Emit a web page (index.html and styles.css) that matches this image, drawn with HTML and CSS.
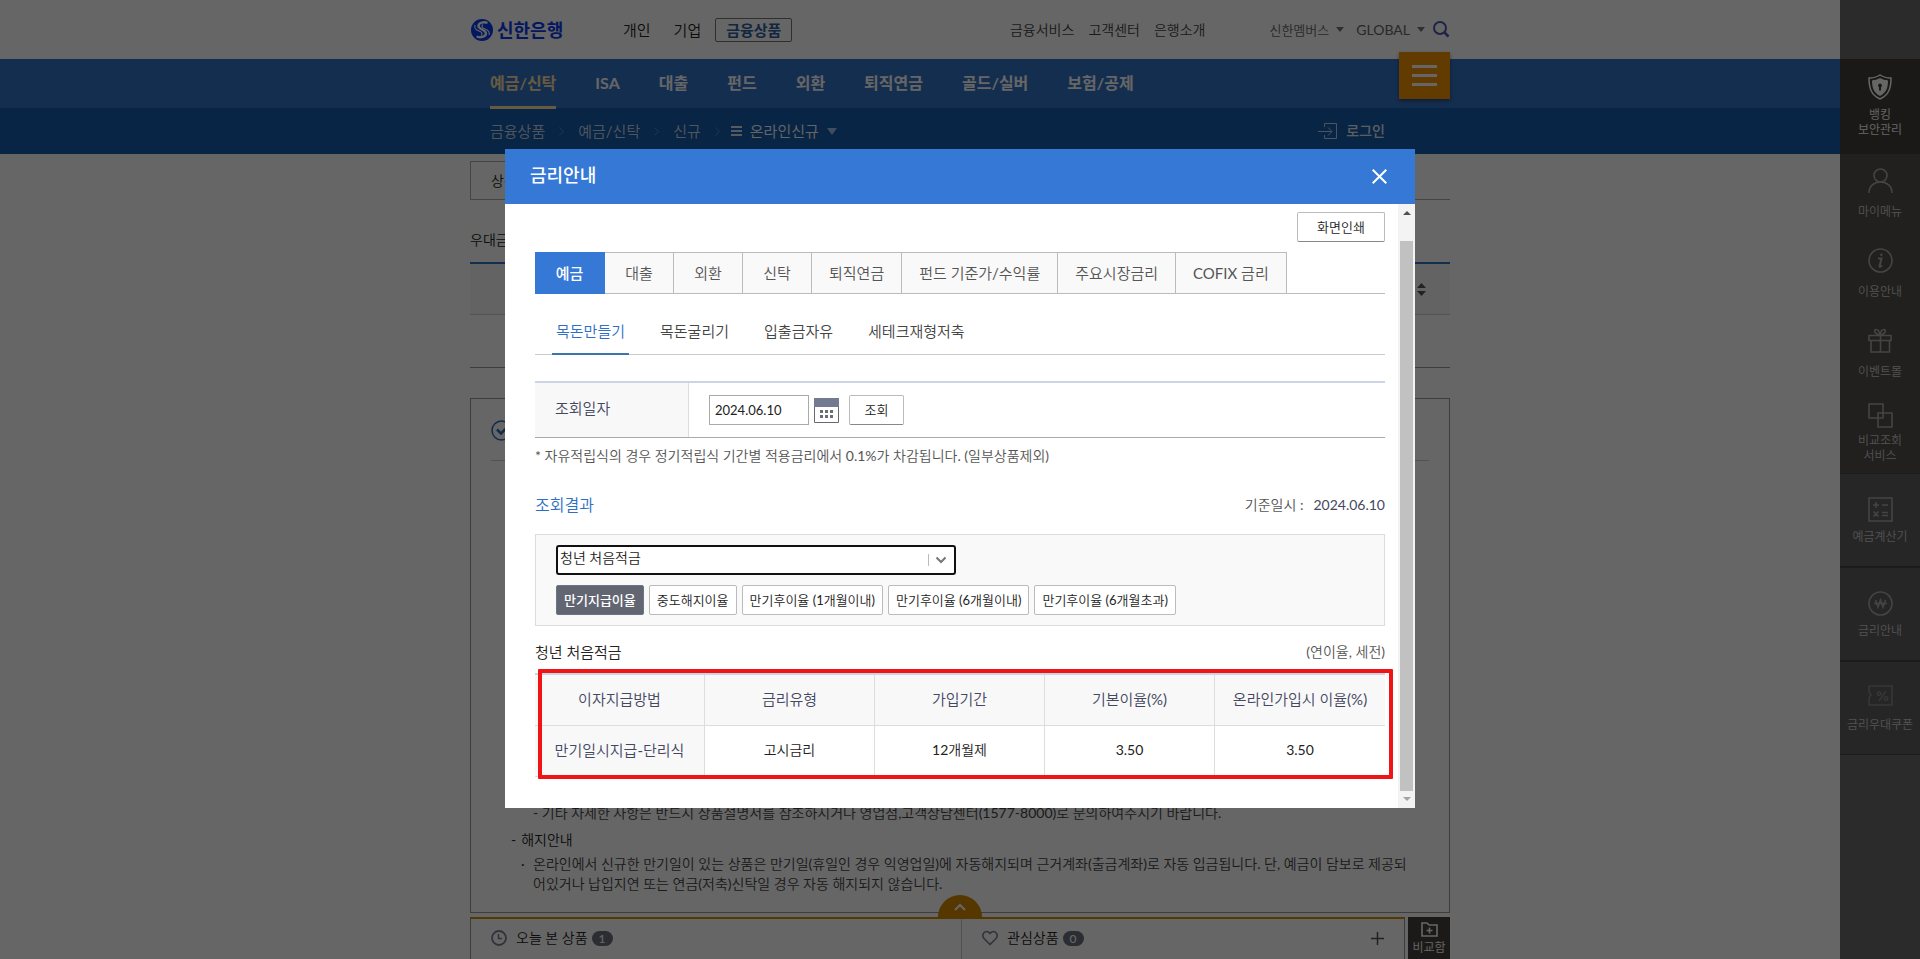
FILE: index.html
```html
<!DOCTYPE html>
<html lang="ko">
<head>
<meta charset="utf-8">
<meta name="viewport" content="width=device-width, initial-scale=1">
<title>신한은행 - 금리안내</title>
<link rel="stylesheet" href="styles.css">
</head>
<body>
<header class="top wrap">
  <a class="logo" href="#">
    <svg width="22" height="22" viewBox="0 0 22 22" aria-hidden="true"><circle cx="11" cy="11" r="11" fill="#0a3cf0"/><path d="M16.500 4C13 2.500 7.500 3.500 7.500 7c0 3.500 7.500 3.500 7.500 7.500 0 3.500-6 4.500-9.500 3" fill="none" stroke="#fff" stroke-width="2.400"/><path d="M4 6c-1 3 1 5 4 6s4 3 2 4.500M18 16c1-3-1-5-4-6s-4-3-2-4.500" fill="none" stroke="#fff" stroke-width="1.100"/></svg>
    <span>신한은행</span>
  </a>
  <nav class="main-links" aria-label="주요">
    <a href="#">개인</a>
    <a href="#">기업</a>
    <a class="current" href="#">금융상품</a>
  </nav>
  <nav class="service-links" aria-label="서비스">
    <a href="#">금융서비스</a>
    <a href="#">고객센터</a>
    <a href="#">은행소개</a>
  </nav>
  <div class="util">
    <button class="drop small" type="button">신한멤버스<svg width="8" height="5" viewBox="0 0 8 5" aria-hidden="true"><path d="M0 0h8L4 5z" fill="#777"/></svg></button>
    <button class="drop" type="button">GLOBAL<svg width="8" height="5" viewBox="0 0 8 5" aria-hidden="true"><path d="M0 0h8L4 5z" fill="#777"/></svg></button>
    <button class="search" type="button" aria-label="검색"><svg width="17" height="17" viewBox="0 0 17 17"><circle cx="7" cy="7" r="6" fill="none" stroke="#4f57ac" stroke-width="2"/><path d="M11.500 11.500l4 4" stroke="#4f57ac" stroke-width="2.500"/></svg></button>
  </div>
</header>

<div class="gnb">
  <div class="wrap gnb-row">
    <nav class="gnb-links" aria-label="금융상품">
      <a class="on" href="#">예금/신탁</a>
      <a href="#">ISA</a>
      <a href="#">대출</a>
      <a href="#">펀드</a>
      <a href="#">외환</a>
      <a href="#">퇴직연금</a>
      <a href="#">골드/실버</a>
      <a href="#">보험/공제</a>
    </nav>
    <button class="all-menu" type="button" aria-label="전체메뉴"><span></span><span></span><span></span></button>
  </div>
</div>
<div class="crumb-bar">
  <div class="wrap crumb-row">
    <nav class="crumbs" aria-label="현재 위치">
      <a href="#">금융상품</a>
      <svg width="5" height="9" viewBox="0 0 5 9" aria-hidden="true"><path d="M.5.5l4 4-4 4"/></svg>
      <a href="#">예금/신탁</a>
      <svg width="5" height="9" viewBox="0 0 5 9" aria-hidden="true"><path d="M.5.5l4 4-4 4"/></svg>
      <a href="#">신규</a>
      <svg width="5" height="9" viewBox="0 0 5 9" aria-hidden="true"><path d="M.5.5l4 4-4 4"/></svg>
      <button class="here" type="button">
        <span class="bars"></span>온라인신규<svg width="10" height="7" viewBox="0 0 10 7" aria-hidden="true"><path class="tri" d="M0 0h10L5 7z"/></svg>
      </button>
    </nav>
    <a class="login" href="#"><svg width="20" height="18" viewBox="0 0 20 18" aria-hidden="true"><path d="M6.500 5V1.500h12v15h-12V13M0 9.500h13.500M10 5.500l4 4-4 4" fill="none" stroke="#c3d2e6"/></svg>로그인</a>
  </div>
</div>

<main class="wrap page">
  <div class="page-tabs"><a href="#">상품</a></div>
  <h2 class="page-label">우대금리</h2>
  <div class="page-head"><button type="button" aria-label="정렬"><svg width="9" height="13" viewBox="0 0 9 13"><path d="M0 5l4.500-5L9 5zM0 8l4.500 5L9 8z" fill="#555"/></svg></button></div>
  <div class="page-row"></div>
  <article class="notice">
    <div class="notice-head"><svg width="21" height="21" viewBox="0 0 21 21" aria-hidden="true"><circle cx="10.500" cy="10.500" r="9.500" fill="none" stroke="#2f6cb5" stroke-width="1.500"/><path d="M6 9.500l4 4 4.500-4.500" fill="none" stroke="#2f6cb5" stroke-width="2.500"/></svg></div>
    <div class="notice-text">
      <p class="deep">- 기타 자세한 사항은 반드시 상품설명서를 참조하시거나 영업점,고객상담센터(1577-8000)로 문의하여주시기 바랍니다.</p>
      <h3><span>-</span>해지안내</h3>
      <p class="dot">온라인에서 신규한 만기일이 있는 상품은 만기일(휴일인 경우 익영업일)에 자동해지되며 근거계좌(출금계좌)로 자동 입금됩니다. 단, 예금이 담보로 제공되<br>어있거나 납입지연 또는 연금(저축)신탁일 경우 자동 해지되지 않습니다.</p>
    </div>
  </article>
</main>

<footer class="dock">
  <div class="dock-bar">
    <button class="dock-toggle" type="button" aria-label="펼치기"><svg width="12" height="8" viewBox="0 0 12 8"><path d="M1 7l5-5 5 5" fill="none" stroke="#fff" stroke-width="2"/></svg></button>
    <div class="dock-cell">
      <svg width="16" height="16" viewBox="0 0 16 16" aria-hidden="true"><circle cx="8" cy="8" r="7" fill="none" stroke="#7c8190" stroke-width="1.800"/><path d="M7.500 4v4.500H11" fill="none" stroke="#7c8190" stroke-width="1.500"/></svg>
      <span>오늘 본 상품</span><b class="count">1</b>
    </div>
    <div class="dock-cell">
      <svg width="16" height="16" viewBox="0 0 16 16" aria-hidden="true"><path d="M8 14.500L2 8.500C-.5 5.500 1.500 1.500 4.500 1.500 6.500 1.500 8 3.500 8 3.500s1.500-2 3.500-2c3 0 5 4 2.500 7z" fill="none" stroke="#7c8190" stroke-width="1.600"/></svg>
      <span>관심상품</span><b class="count">0</b>
      <svg class="plus" width="13" height="13" viewBox="0 0 13 13" aria-hidden="true"><path d="M6.500 0v13M0 6.500h13" stroke="#555" stroke-width="1.500"/></svg>
    </div>
  </div>
  <button class="compare" type="button"><svg width="17" height="15" viewBox="0 0 17 15" aria-hidden="true"><path d="M1 1h5l2 2h8v11H1zM8.500 5.500v6M5.500 8.500h6" fill="none" stroke="#fff" stroke-width="1.600"/></svg>비교함</button>
</footer>

<aside class="side" aria-label="빠른메뉴">
  <a class="safe" href="#"><svg width="24" height="26" viewBox="0 0 24 26" aria-hidden="true"><path d="M12 1c3 2 7 3 11 3 0 10-2 17-11 21C3 21 1 14 1 4c4 0 8-1 11-3z" fill="none" stroke="#fff" stroke-width="1.500"/><path d="M12 4c3 1.500 5 2 8 2.500C20 14 18 19 12 22 6 19 4 14 4 6.500 7 6 9 5.500 12 4z" fill="#fff"/><path d="M12 9.500a2 2 0 0 1 1 3.700v3.300h-2v-3.300a2 2 0 0 1 1-3.700z" fill="#413f3a"/></svg>뱅킹<br>보안관리</a>
  <a class="quick" href="#"><svg width="25" height="25" viewBox="0 0 25 25"><circle cx="12.500" cy="7.500" r="6.500"/><path d="M1 25c0-7 5-11 11.500-11S24 18 24 25"/></svg>마이메뉴</a>
  <a class="quick" href="#"><svg width="25" height="25" viewBox="0 0 25 25"><circle cx="12.500" cy="12.500" r="11.500"/><path d="M10 10.500h3.500l-2 8c1 .5 1.500 0 2.500-1M13.500 5.500l-.3 2.500" stroke-width="2"/></svg>이용안내</a>
  <a class="quick" href="#"><svg width="25" height="25" viewBox="0 0 25 25"><path d="M1 7.500h22v5H1zM3 12.500h18.500V24H3zM12.500 7v17M12 7C6 6 5.500 1.500 8 1.500S11.500 4 12 7c.5-3 1.500-5.500 4-5.500S18 6 12 7z"/></svg>이벤트몰</a>
  <a class="quick two" href="#"><svg width="25" height="25" viewBox="0 0 25 25"><path d="M1 1h14v14H1zM10 10h14v14H10z"/></svg>비교조회<br>서비스</a>
  <a class="tool" href="#"><svg width="25" height="25" viewBox="0 0 25 25"><path d="M1 1h23v23H1zM5 8h6M8 5v6M14 8h6M5.500 14.500l5 5M10.500 14.500l-5 5M14 15.500h6M14 18.500h6"/></svg>예금계산기</a>
  <a class="tool" href="#"><svg width="25" height="25" viewBox="0 0 25 25"><circle cx="12.500" cy="12.500" r="11.500"/><path d="M7.500 9l2.500 7 2.500-7 2.500 7 2.500-7M6 12.500h13"/></svg>금리안내</a>
  <a class="tool faint" href="#"><svg width="25" height="25" viewBox="0 0 25 25"><path d="M1 1h23v19H1v-7l2-3-2-3zM18 6l-7 10"/><circle cx="11" cy="8.500" r="1.700"/><circle cx="18" cy="13.500" r="1.700"/></svg>금리우대쿠폰</a>
</aside>

<div class="overlay">
  <section class="modal" role="dialog" aria-modal="true" aria-labelledby="modal-title">
    <header class="modal-head">
      <h1 id="modal-title">금리안내</h1>
      <button type="button" aria-label="닫기"><svg width="15" height="15" viewBox="0 0 15 15"><path d="M.7.7l13.600 13.600M14.300.7L.7 14.300" stroke="#fff" stroke-width="2"/></svg></button>
    </header>
    <div class="modal-body">
      <div class="content">
        <button class="btn print" type="button">화면인쇄</button>
        <nav class="tabs" aria-label="금리 구분">
          <a class="on" href="#">예금</a>
          <a href="#">대출</a>
          <a href="#">외환</a>
          <a href="#">신탁</a>
          <a href="#">퇴직연금</a>
          <a href="#">펀드 기준가/수익률</a>
          <a href="#">주요시장금리</a>
          <a href="#">COFIX 금리</a>
        </nav>
        <nav class="subtabs" aria-label="예금 구분">
          <a class="on" href="#">목돈만들기</a>
          <a href="#">목돈굴리기</a>
          <a href="#">입출금자유</a>
          <a href="#">세테크재형저축</a>
        </nav>
        <form class="query">
          <label for="date">조회일자</label>
          <div class="query-fields">
            <input id="date" type="text" value="2024.06.10">
            <button class="calendar" type="button" aria-label="달력"><svg width="25" height="25" viewBox="0 0 25 25"><path d="M.5.5h24v24H.5z" fill="#fff" stroke="#68696f"/><path d="M0 0h25v9H0z" fill="#727b92"/><path d="M6 12h3v3H6zM11 12h3v3h-3zM16 12h3v3h-3zM6 17h3v3H6zM11 17h3v3h-3zM16 17h3v3h-3z" fill="#6b6d74"/></svg></button>
            <button class="btn look" type="button">조회</button>
          </div>
        </form>
        <p class="hint">* 자유적립식의 경우 정기적립식 기간별 적용금리에서 0.1%가 차감됩니다. (일부상품제외)</p>
        <div class="result-head">
          <h2>조회결과</h2>
          <p>기준일시 :<strong>2024.06.10</strong></p>
        </div>
        <div class="filter">
          <div class="select">
            <select aria-label="상품 선택"><option>청년 처음적금</option></select>
            <svg width="18" height="12" viewBox="0 0 18 12" aria-hidden="true"><path d="M.5 0v12" stroke="#bbb"/><path d="M8.500 3.500L13 8l4.500-4.500" fill="none" stroke="#777" stroke-width="2"/></svg>
          </div>
          <div class="chips">
            <button class="btn on" type="button">만기지급이율</button>
            <button class="btn" type="button">중도해지이율</button>
            <button class="btn" type="button">만기후이율 (1개월이내)</button>
            <button class="btn" type="button">만기후이율 (6개월이내)</button>
            <button class="btn" type="button">만기후이율 (6개월초과)</button>
          </div>
        </div>
        <div class="rate-head"><h3>청년 처음적금</h3><p>(연이율, 세전)</p></div>
        <div class="rate">
          <table>
            <thead><tr><th scope="col">이자지급방법</th><th scope="col">금리유형</th><th scope="col">가입기간</th><th scope="col">기본이율(%)</th><th scope="col">온라인가입시 이율(%)</th></tr></thead>
            <tbody><tr><th scope="row">만기일시지급-단리식</th><td>고시금리</td><td>12개월제</td><td>3.50</td><td>3.50</td></tr></tbody>
          </table>
          <div class="mark"></div>
        </div>
      </div>
      <div class="scroll" aria-hidden="true">
        <svg width="8" height="4" viewBox="0 0 8 4"><path d="M0 4l4-4 4 4z" fill="#505050"/></svg>
        <span></span>
        <svg width="8" height="4" viewBox="0 0 8 4"><path d="M0 0l4 4 4-4z" fill="#a3a3a3"/></svg>
      </div>
    </div>
  </section>
</div>
</body>
</html>
```
FILE: styles.css
```css
* { box-sizing: border-box; }
body {
  margin: 0;
  height: 100vh;
  overflow: hidden;
  background: #fff;
  color: #222;
  font: 400 14px/20px Lato, "Noto Sans CJK KR DemiLight", "Noto Sans CJK KR", sans-serif;
}
h1, h2, h3, p { margin: 0; font-weight: inherit; font-size: inherit; }
a { color: inherit; text-decoration: none; }
button, input, select { font: inherit; color: inherit; }
button { margin: 0; padding: 0; border: 0; background: none; }
svg { display: block; flex: none; }
.wrap { width: 980px; max-width: 100%; margin: 0 auto; }
.logo, .current, .gnb-links, .login, .modal-head h1, .tabs .on, .chips .on { font-family: Lato, "Noto Sans CJK KR", sans-serif; }

/* top bar */
.top { display: flex; align-items: center; height: 59px; }
.logo { display: flex; align-items: center; gap: 4px; width: 153px; padding-left: 1px; color: #0a3cf0; font-size: 18px; font-weight: 700; }
.main-links { display: flex; align-items: center; gap: 23px; font-size: 15px; }
.main-links .current { height: 24px; margin-left: -9px; padding: 0 10px; border: 1px solid #777; border-radius: 2px; color: #2f5f9f; font-weight: 700; line-height: 22px; }
.service-links { display: flex; gap: 14px; margin-left: auto; color: #444; }
.util { display: flex; align-items: center; margin-left: 64px; color: #666; }
.drop { display: flex; align-items: center; gap: 7px; margin-right: 8px; }
.drop.small { margin-right: 12px; font-size: 13px; }

/* navigation */
.gnb { background: #3473c6; }
.gnb-row { display: flex; justify-content: space-between; height: 49px; padding-left: 20px; }
.gnb-links { display: flex; gap: 39px; color: #fff; font-size: 16px; font-weight: 700; line-height: 48px; }
.gnb-links .on { height: 50px; border-bottom: 3px solid #ffe0a8; color: #ffe0a8; }
.all-menu { display: flex; flex-direction: column; align-items: center; justify-content: center; gap: 6px; width: 51px; height: 47px; margin-top: -7px; background: #f59400; box-shadow: 0 2px 4px rgba(0, 0, 0, .4); }
.all-menu span { width: 25px; height: 3px; background: #fff; }
.crumb-bar { background: #165cae; }
.crumb-row { display: flex; align-items: center; justify-content: space-between; height: 46px; padding: 0 65px 0 20px; }
.crumbs { display: flex; align-items: center; gap: 14px; color: #c8d6e8; font-size: 15px; }
.crumbs path { fill: none; stroke: #5784b8; }
.crumbs .tri { fill: #9ec3ee; stroke: none; }
.here { display: flex; align-items: center; gap: 8px; margin-left: -3px; color: #fff; }
.bars { width: 11px; height: 10px; border: solid #d9e0ea; border-width: 2px 0; background: linear-gradient(transparent 2px, #d9e0ea 2px, #d9e0ea 4px, transparent 4px); }
.login { display: flex; align-items: center; gap: 8px; color: #e4ebf3; font-weight: 500; }

/* page behind the dialog */
.page { padding-top: 7px; }
.page-tabs { height: 39px; border-bottom: 1px solid #aaa; }
.page-tabs a { display: block; width: 200px; height: 39px; padding-left: 20px; border: 1px solid #aaa; font-size: 14px; line-height: 37px; }
.page-label { padding: 30px 0 12px; border-bottom: 2px solid #3473c6; }
.page-head { display: flex; align-items: center; justify-content: flex-end; height: 51px; padding-right: 24px; border-bottom: 1px solid #ccc; background: #f7f7f7; }
.page-row { height: 53px; border-bottom: 1px solid #999; }
.notice { display: flex; flex-direction: column; justify-content: space-between; min-height: 515px; margin-top: 30px; padding: 0 20px 15px; border: 1px solid #999; color: #444; }
.notice-head { padding: 21px 0 19px; border-bottom: 1px solid #ccc; }
.notice-text { padding: 0 0 3px 20px; }
.notice-text h3 { display: flex; gap: 5px; margin: 7px 0 4px; color: #222; }
.deep { padding-left: 22px; }
.dot { padding-left: 22px; white-space: nowrap; }
.dot::before { content: "·"; float: left; margin-left: -12px; }

/* bottom dock */
.dock { position: fixed; right: 0; bottom: 0; left: 0; display: flex; gap: 3px; width: 980px; max-width: 100%; height: 42px; margin: 0 auto; }
.dock-bar { position: relative; display: flex; flex: 1; min-width: 0; border: 1px solid #999; border-width: 0 1px; border-top: 2px solid #d68a00; background: #fff; }
.dock-cell { display: flex; align-items: center; flex: 0 0 490px; padding: 0 20px 2px; }
.dock-cell + .dock-cell { flex: 1; border-left: 1px solid #ccc; }
.dock-cell span { margin: 0 4px 0 9px; }
.count { width: 21px; height: 15px; border-radius: 8px; background: #6c727f; color: #fff; font-size: 12px; font-weight: 500; line-height: 15px; text-align: center; }
.plus { margin-left: auto; }
.dock-toggle { position: absolute; left: 467px; bottom: 100%; display: flex; align-items: center; justify-content: center; width: 44px; height: 24px; border-radius: 22px 22px 0 0; background: #d68a00; }
.compare { display: flex; flex: none; flex-direction: column; align-items: center; justify-content: center; gap: 2px; width: 42px; padding-top: 3px; background: #45423c; color: #fff; font-size: 12px; line-height: 18px; }

/* quick menu */
.side { position: fixed; top: 0; right: 0; bottom: 0; display: flex; flex-direction: column; width: 80px; padding-top: 59px; background: #6c6c6c; font-size: 12px; line-height: 15px; text-align: center; }
.side a { display: flex; flex-direction: column; align-items: center; color: #ccc; }
.side svg { fill: none; stroke: #aaa; stroke-width: 1.600; }
.side .safe { height: 95px; padding-top: 15px; background: #413f3a; color: #fff; }
.side .safe svg { margin-bottom: 7px; stroke: none; }
.side .quick { height: 80px; padding-top: 14px; background: #53504b; }
.quick svg { margin-bottom: 11px; }
.side .two { height: 79px; padding-top: 9px; }
.two svg { margin-bottom: 5px; }
.side .tool { height: 94px; padding-top: 23px; border-top: 1px solid #444; border-bottom: 1px solid #444; background: #625f5f; }
.tool svg { margin-bottom: 7px; }
.side .faint svg { stroke: #888; }

/* dialog */
.overlay { position: fixed; inset: 0; display: flex; align-items: center; justify-content: center; padding-bottom: 2px; background: rgba(0, 0, 0, .6); }
.modal { width: 910px; max-width: 100%; background: #fff; }
.modal-head { display: flex; align-items: center; justify-content: space-between; height: 55px; padding: 0 28px 0 25px; background: #3678d6; color: #fff; }
.modal-head h1 { padding-bottom: 4px; font-size: 18px; font-weight: 500; }
.modal-body { display: flex; }
.content { flex: 1; padding: 8px 13px 31px 30px; }
.btn { height: 30px; padding: 0 7px; border: 1px solid #bbb; border-radius: 2px; background: #fff; color: #222; font-size: 13px; line-height: 28px; white-space: nowrap; }
.print { display: block; width: 88px; margin-left: auto; border-bottom-color: #888; }
.tabs { display: flex; margin-top: 10px; border-bottom: 1px solid #bbb; color: #555; font-size: 15px; line-height: 40px; text-align: center; }
.tabs a { min-width: 69px; padding: 0 17px; border-top: 1px solid #bbb; border-right: 1px solid #bbb; background: #f9f9f9; }
.tabs .on { width: 70px; margin-bottom: -1px; border-color: #3678d6; background: #3678d6; color: #fff; font-weight: 500; }
.subtabs { display: flex; gap: 27px; margin-top: 17px; padding-left: 17px; box-shadow: inset 0 -1px #ccc; color: #444; font-size: 15px; }
.subtabs a { padding: 10px 4px 12px; border-bottom: 2px solid transparent; }
.subtabs .on { border-color: #3d75ae; color: #2e6fc4; }
.query { display: flex; margin-top: 26px; border-top: 2px solid #ccd5e4; border-bottom: 1px solid #aaa; }
.query label { width: 154px; padding-left: 20px; border-right: 1px solid #ddd; background: #f8f8f9; color: #44485f; font-size: 15px; line-height: 50px; }
.query-fields { display: flex; align-items: center; padding: 12px 20px; }
.query input { width: 100px; height: 30px; padding: 0 5px; border: 1px solid #aaa; background: #fff; font-size: 13px; }
.calendar { margin: 0 10px 0 5px; }
.look { width: 55px; border-bottom-color: #888; }
.hint { margin-top: 8px; color: #555; }
.result-head { display: flex; justify-content: space-between; margin-top: 27px; line-height: 24px; }
.result-head h2 { color: #2e6fc4; font-size: 16px; }
.result-head p { color: #555; }
.result-head strong { margin-left: 10px; color: #44485f; font-weight: 400; }
.filter { margin-top: 17px; padding: 10px 20px; border: 1px solid #dcdcdc; background: #f9f9f9; }
.select { position: relative; width: 400px; }
.select select { display: block; width: 100%; height: 30px; padding: 0 2px 4px; border: 2px solid #111; border-radius: 3px; appearance: none; background: #fff; font-size: 14px; }
.select svg { position: absolute; top: 9px; right: 10px; }
.chips { display: flex; gap: 5px; margin-top: 10px; }
.chips .on { border-color: #6b7486; background: #626672; color: #fff; font-weight: 500; }
.rate-head { display: flex; justify-content: space-between; margin-top: 16px; color: #555; }
.rate-head h3 { color: #222; font-size: 15px; }
.rate { position: relative; margin-top: 11px; }
.rate table { width: 100%; border-collapse: separate; border-spacing: 0; border-top: 2px solid #ccd5e4; table-layout: fixed; font-size: 15px; text-align: center; }
.rate th, .rate td { height: 51px; padding: 0 0 3px; border-right: 1px solid #ddd; border-bottom: 1px solid #ddd; }
.rate td { font-size: 14px; color: #222; }
.rate th { background: #f8f8f9; color: #44485f; font-weight: 400; }
.rate th:last-child, .rate td:last-child { border-right: 0; }
.mark { position: absolute; top: -4px; right: -8px; bottom: -2px; left: 3px; border: 4px solid #f01414; border-radius: 1px; }
.scroll { display: flex; flex-direction: column; align-items: center; width: 17px; padding: 7px 0; background: #f3f3f3; }
.scroll span { flex: 1; width: 13px; margin: 26px 0 6px; background: #c1c1c1; }
```
